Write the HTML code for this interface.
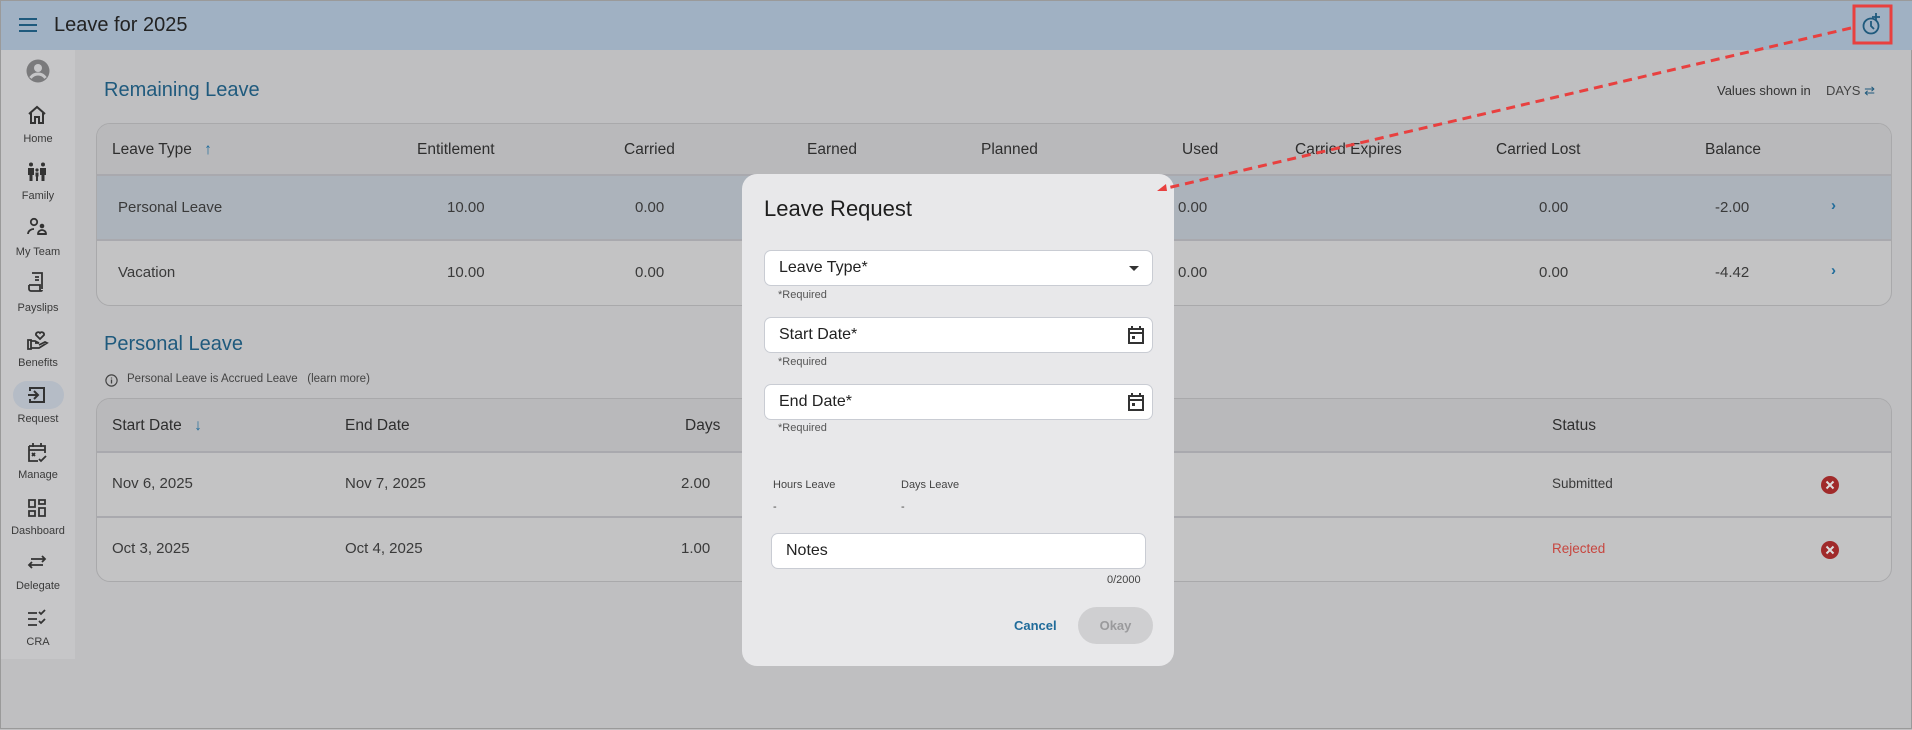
<!DOCTYPE html>
<html><head><meta charset="utf-8"><style>
*{margin:0;padding:0;box-sizing:border-box}
body{width:1912px;height:729px;overflow:hidden;background:#bfbfc1;font-family:"Liberation Sans",sans-serif;color:#333;position:relative;border:1px solid #9a9a9a}
.a{position:absolute;white-space:nowrap}
.hdr{position:absolute;left:0;top:0;width:1912px;height:49px;background:#a0b1c3}
.side{position:absolute;left:0;top:49px;width:74px;height:609px;background:#c6c6c8}
.lbl{position:absolute;width:74px;text-align:center;font-size:11px;color:#3a3a3a}
.ic{position:absolute;left:25px}
.tbl{position:absolute;left:95px;width:1796px;border:1px solid #a9a9ab;border-radius:14px;overflow:hidden;background:#c3c3c4}
.th{background:#b9b9bb;border-bottom:2px solid #a9a9ae;position:relative}
.tr{position:relative;border-bottom:2px solid #a9a9ae}
.tr:last-child{border-bottom:none}
.hd{font-size:15.5px;color:#2e2e2e;position:absolute}
.cell{font-size:15px;color:#3a3a3a;position:absolute}
.dlg{position:absolute;left:741px;top:173px;width:432px;height:492px;background:#e8e8ea;border-radius:15px}
.fld{position:absolute;background:#fff;border:1px solid #c9ccd3;border-radius:7px;height:36px}
.fld span{position:absolute;left:14px;top:8px;font-size:16px;color:#222}
.req{position:absolute;font-size:11px;color:#555}
</style></head><body>
<div class="hdr"></div>
<svg class="a" style="left:17px;top:16px" width="20" height="16"><path d="M1 2h18M1 8h18M1 14h18" stroke="#1f5a7d" stroke-width="2"/></svg>
<div class="a" style="left:53px;top:13px;font-size:20px;color:#222">Leave for 2025</div>

<div class="side"></div>
<svg class="a" style="left:25px;top:58px" width="24" height="24"><circle cx="12" cy="12" r="11.5" fill="#7a7a7c"/><circle cx="12" cy="9" r="4" fill="#c6c6c8"/><path d="M4.5 19c2-3 4.5-4 7.5-4s5.5 1 7.5 4" stroke="#c6c6c8" stroke-width="3" fill="none"/></svg>
<svg class="ic" style="top:104px" width="22" height="20"><path d="M3 9L11 2l8 7M5 8v10h4v-6h4v6h4V8" fill="none" stroke="#333" stroke-width="2"/></svg>
<div class="lbl" style="top:132px">Home</div>
<svg class="ic" style="top:161px" width="22" height="20"><circle cx="5" cy="2.5" r="2" fill="#333"/><circle cx="17" cy="2.5" r="2" fill="#333"/><circle cx="11" cy="8" r="1.6" fill="#333"/><path d="M2 6h6v7H6.5v6h-3v-6H2zM14 6h6v7h-1.5v6h-3v-6H14zM9.5 10.5h3v4h-.5v4.5h-2v-4.5h-.5z" fill="#333"/></svg>
<div class="lbl" style="top:189px">Family</div>
<svg class="ic" style="top:216px" width="22" height="20"><circle cx="8" cy="5" r="3.2" fill="none" stroke="#333" stroke-width="1.8"/><circle cx="16" cy="9" r="2.3" fill="#333"/><path d="M2 17c0-3 3-5 6-5M12 17c0-2.5 2-4 4-4s4 1.5 4 4z" fill="none" stroke="#333" stroke-width="1.8"/><path d="M12 17h8" stroke="#333" stroke-width="2"/></svg>
<div class="lbl" style="top:245px">My Team</div>
<svg class="ic" style="top:270px" width="22" height="22"><path d="M6 2h10v16M3 14h11v5a1 1 0 0 0 2 0M3 14v4a2 2 0 0 0 2 2h10M9 6h4M9 9h4" fill="none" stroke="#333" stroke-width="1.8"/></svg>
<div class="lbl" style="top:301px">Payslips</div>
<svg class="ic" style="top:328px" width="24" height="22"><path d="M14 10l-4-4a2.3 2.3 0 0 1 4-2a2.3 2.3 0 0 1 4 2z" fill="none" stroke="#333" stroke-width="1.8"/><path d="M2 11h3v9H2zM5 12h4l4 2h-4M5 19l8 0 8-5-2-1-6 3" fill="none" stroke="#333" stroke-width="1.8"/></svg>
<div class="lbl" style="top:356px">Benefits</div>
<div class="a" style="left:12px;top:380px;width:51px;height:28px;border-radius:14px;background:#b5bcc6"></div>
<svg class="ic" style="top:384px" width="22" height="20"><path d="M4 6V3h14v14H4v-3M2 10h10M8 6l4 4-4 4" fill="none" stroke="#333" stroke-width="2"/></svg>
<div class="lbl" style="top:412px">Request</div>
<svg class="ic" style="top:440px" width="22" height="22"><path d="M3 5h16v7M3 5v15h9M3 9h16M7 2v4M15 2v4M13 18l2 2 5-5M6 12l3 3M9 12l-3 3" fill="none" stroke="#333" stroke-width="1.8"/></svg>
<div class="lbl" style="top:468px">Manage</div>
<svg class="ic" style="top:496px" width="22" height="22"><path d="M3 3h6v7H3zM13 3h6v4h-6zM13 11h6v8h-6zM3 14h6v5H3z" fill="none" stroke="#333" stroke-width="1.8"/></svg>
<div class="lbl" style="top:524px">Dashboard</div>
<svg class="ic" style="top:551px" width="22" height="20"><path d="M5 7h14M16 4l3 3-3 3M17 13H3M6 10l-3 3 3 3" fill="none" stroke="#333" stroke-width="1.8"/></svg>
<div class="lbl" style="top:579px">Delegate</div>
<svg class="ic" style="top:606px" width="22" height="20"><path d="M2 6h9M2 12h9M2 18h9M13 5l2 2 4-4M13 14l2 2 4-4" fill="none" stroke="#333" stroke-width="1.8"/></svg>
<div class="lbl" style="top:635px">CRA</div>

<div class="a" style="left:103px;top:78px;font-size:20px;color:#1f5a7d">Remaining Leave</div>
<div class="a" style="left:1716px;top:82px;font-size:13px;color:#333">Values shown in</div>
<div class="a" style="left:1825px;top:82px;font-size:13px;color:#444">DAYS <span style="color:#1f5a7d">⇄</span></div>

<div class="tbl" style="top:122px;height:183px">
 <div class="th" style="height:52px">
  <div class="hd" style="left:15px;top:17px">Leave Type <span style="color:#1f6b9a;margin-left:8px">↑</span></div>
  <div class="hd" style="left:320px;top:17px">Entitlement</div>
  <div class="hd" style="left:527px;top:17px">Carried</div>
  <div class="hd" style="left:710px;top:17px">Earned</div>
  <div class="hd" style="left:884px;top:17px">Planned</div>
  <div class="hd" style="left:1085px;top:17px">Used</div>
  <div class="hd" style="left:1198px;top:17px">Carried Expires</div>
  <div class="hd" style="left:1399px;top:17px">Carried Lost</div>
  <div class="hd" style="left:1608px;top:17px">Balance</div>
 </div>
 <div class="tr" style="height:65px;background:#acb3bb">
  <div class="cell" style="left:21px;top:23px">Personal Leave</div>
  <div class="cell" style="left:350px;top:23px">10.00</div>
  <div class="cell" style="left:538px;top:23px">0.00</div>
  <div class="cell" style="left:1081px;top:23px">0.00</div>
  <div class="cell" style="left:1442px;top:23px">0.00</div>
  <div class="cell" style="left:1618px;top:23px">-2.00</div>
  <div class="cell" style="left:1734px;top:21px;color:#1f6b9a;font-weight:bold">›</div>
 </div>
 <div class="tr" style="height:64px">
  <div class="cell" style="left:21px;top:23px">Vacation</div>
  <div class="cell" style="left:350px;top:23px">10.00</div>
  <div class="cell" style="left:538px;top:23px">0.00</div>
  <div class="cell" style="left:1081px;top:23px">0.00</div>
  <div class="cell" style="left:1442px;top:23px">0.00</div>
  <div class="cell" style="left:1618px;top:23px">-4.42</div>
  <div class="cell" style="left:1734px;top:21px;color:#1f6b9a;font-weight:bold">›</div>
 </div>
</div>

<div class="a" style="left:103px;top:332px;font-size:20px;color:#1f5a7d">Personal Leave</div>
<svg class="a" style="left:104px;top:373px" width="13" height="13"><circle cx="6.5" cy="6.5" r="5.6" fill="none" stroke="#444" stroke-width="1.2"/><path d="M6.5 5.5v4M6.5 3.5v1" stroke="#444" stroke-width="1.3"/></svg>
<div class="a" style="left:126px;top:372px;font-size:11.5px;color:#444">Personal Leave is Accrued Leave &nbsp;&nbsp;(learn more)</div>

<div class="tbl" style="top:397px;height:184px">
 <div class="th" style="height:54px">
  <div class="hd" style="left:15px;top:18px">Start Date <span style="color:#1f6b9a;margin-left:8px">↓</span></div>
  <div class="hd" style="left:248px;top:18px">End Date</div>
  <div class="hd" style="left:588px;top:18px">Days</div>
  <div class="hd" style="left:1455px;top:18px">Status</div>
 </div>
 <div class="tr" style="height:65px">
  <div class="cell" style="left:15px;top:22px">Nov 6, 2025</div>
  <div class="cell" style="left:248px;top:22px">Nov 7, 2025</div>
  <div class="cell" style="left:584px;top:22px">2.00</div>
  <div class="cell" style="left:1455px;top:23px;font-size:13.5px">Submitted</div>
  <svg class="a" style="left:1724px;top:23px" width="18" height="18"><circle cx="9" cy="9" r="9" fill="#a02a2a"/><path d="M5.5 5.5l7 7M12.5 5.5l-7 7" stroke="#ddd" stroke-width="2"/></svg>
 </div>
 <div class="tr" style="height:64px">
  <div class="cell" style="left:15px;top:22px">Oct 3, 2025</div>
  <div class="cell" style="left:248px;top:22px">Oct 4, 2025</div>
  <div class="cell" style="left:584px;top:22px">1.00</div>
  <div class="cell" style="left:1455px;top:23px;font-size:13.5px;color:#c7463f">Rejected</div>
  <svg class="a" style="left:1724px;top:23px" width="18" height="18"><circle cx="9" cy="9" r="9" fill="#a02a2a"/><path d="M5.5 5.5l7 7M12.5 5.5l-7 7" stroke="#ddd" stroke-width="2"/></svg>
 </div>
</div>

<div class="dlg">
 <div class="a" style="left:22px;top:22px;font-size:22px;color:#1e1e1e">Leave Request</div>
 <div class="fld" style="left:22px;top:76px;width:389px"><span>Leave Type*</span><svg class="a" style="left:364px;top:15px" width="10" height="6"><path d="M0 0h10L5 5z" fill="#333"/></svg></div>
 <div class="req" style="left:36px;top:115px">*Required</div>
 <div class="fld" style="left:22px;top:143px;width:389px"><span>Start Date*</span><svg class="a" style="left:362px;top:7px" width="18" height="20"><path d="M2 4h14v14H2zM2 8h14M5 1v4M13 1v4" fill="none" stroke="#333" stroke-width="2"/><rect x="5" y="11" width="3" height="3" fill="#333"/></svg></div>
 <div class="req" style="left:36px;top:182px">*Required</div>
 <div class="fld" style="left:22px;top:210px;width:389px"><span>End Date*</span><svg class="a" style="left:362px;top:7px" width="18" height="20"><path d="M2 4h14v14H2zM2 8h14M5 1v4M13 1v4" fill="none" stroke="#333" stroke-width="2"/><rect x="5" y="11" width="3" height="3" fill="#333"/></svg></div>
 <div class="req" style="left:36px;top:248px">*Required</div>
 <div class="req" style="left:31px;top:305px;color:#444">Hours Leave</div>
 <div class="req" style="left:159px;top:305px;color:#444">Days Leave</div>
 <div class="req" style="left:31px;top:327px;color:#444">-</div>
 <div class="req" style="left:159px;top:327px;color:#444">-</div>
 <div class="fld" style="left:29px;top:359px;width:375px"><span>Notes</span></div>
 <div class="req" style="left:365px;top:400px;color:#444">0/2000</div>
 <div class="a" style="left:272px;top:444px;font-size:13px;font-weight:bold;color:#1f6b9a">Cancel</div>
 <div class="a" style="left:336px;top:433px;width:75px;height:37px;border-radius:19px;background:#cfcfd1;color:#9a9a9c;font-size:13px;text-align:center;line-height:37px;font-weight:bold">Okay</div>
</div>

<svg class="a" style="left:0;top:0" width="1912" height="729">
 <rect x="1853" y="5" width="37" height="37" fill="none" stroke="#e8403f" stroke-width="3"/>
 <circle cx="1870" cy="25" r="7.5" fill="none" stroke="#1f5a7d" stroke-width="1.8"/>
 <path d="M1870 20v5l3 3M1875 12v8M1871 16h8" stroke="#1f5a7d" stroke-width="1.8" fill="none"/>
 <path d="M1850 27L1162 188" stroke="#e8403f" stroke-width="3" stroke-dasharray="9,6"/>
 <path d="M1156 190l9-7 1 7z" fill="#e8403f"/>
</svg>
</body></html>
